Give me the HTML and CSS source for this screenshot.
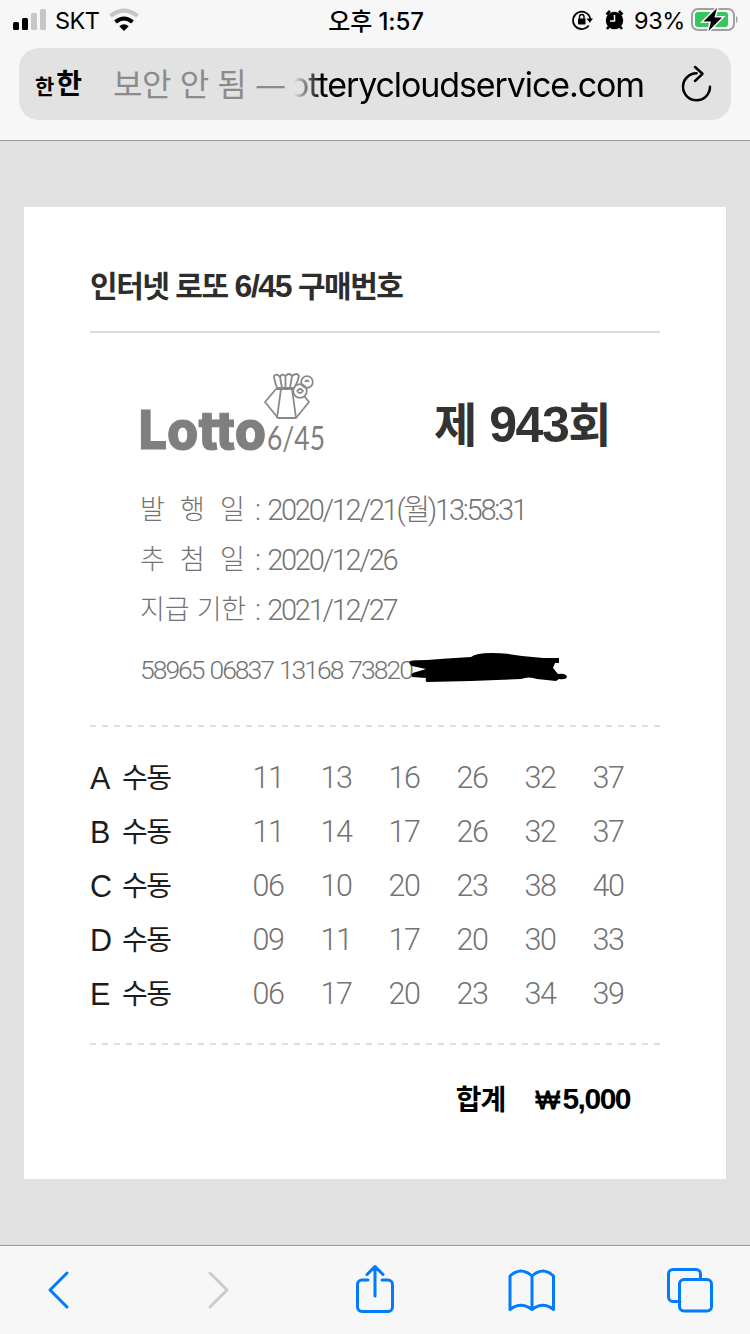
FILE: index.html
```
<!DOCTYPE html>
<html lang="ko">
<head>
    <meta charset="UTF-8">
    <meta name="viewport" content="width=device-width, initial-scale=1.0">
    <title>인터넷 로또 6/45 구매번호</title>
    <link rel="stylesheet" href="styles.css">
</head>
<body>
    <header>
        <div class="status">
            <div class="status-left">
                <svg width="34" height="22" viewBox="0 0 34 22">
                    <rect x="0" y="13" width="6" height="8" rx="1.5"/>
                    <rect x="9" y="9" width="6" height="12" rx="1.5"/>
                    <rect x="18" y="4" width="6" height="17" rx="1.5" fill="#c6c6c6"/>
                    <rect x="27" y="0" width="6" height="21" rx="1.5" fill="#c6c6c6"/>
                </svg>
                <span class="carrier">SKT</span>
                <svg width="30" height="22" viewBox="0 0 30 22">
                    <path d="M1.5 7Q15 -3.8 28.500 7" fill="none" stroke="#c6c6c6" stroke-width="4"/>
                    <path d="M6.500 13Q15 6 23.500 13" fill="none" stroke="#000" stroke-width="4"/>
                    <path d="M10.300 17.300Q15 13 19.700 17.300L15 22Z"/>
                </svg>
            </div>
            <span class="clock">오후 1:57</span>
            <div class="status-right">
                <svg width="22" height="20" viewBox="0 0 22 20">
                    <path d="M16.700 15.600A8.700 8.700 0 1 1 18.300 9" fill="none" stroke="#000" stroke-width="1.700"/>
                    <path d="M14.500 8.500H21L17.800 12.800Z"/>
                    <rect x="6" y="8.500" width="7.500" height="6" rx=".8"/>
                    <path d="M7.500 9V6.700a2.250 2.250 0 0 1 4.500 0V9" fill="none" stroke="#000" stroke-width="1.400"/>
                </svg>
                <svg class="alarm" width="20" height="20" viewBox="0 0 20 20">
                    <circle cx="9.500" cy="10.500" r="8.700"/>
                    <path d="M1.500 4.500L5 1M14 1l3.500 3.500M4 16.500l-2 2.500M15 16.500l2 2.500" stroke="#000" stroke-width="2.600"/>
                    <path d="M9.500 5v6H5" fill="none" stroke="#f7f7f7" stroke-width="1.500"/>
                </svg>
                <span class="percent">93%</span>
                <svg width="48" height="26" viewBox="0 0 48 26">
                    <rect x="1" y="2" width="42" height="21" rx="6" fill="none" stroke="#a0a0a0" stroke-width="2"/>
                    <rect x="4" y="5" width="33" height="15" rx="3" fill="#34c759"/>
                    <path d="M45 8.500q3 4 0 8Z" fill="#a0a0a0"/>
                    <path d="M26 1L12.500 14.500H20L17.500 24L31 10.500H23.500Z" stroke="#f7f7f7" stroke-width="3" paint-order="stroke"/>
                </svg>
            </div>
        </div>
        <div class="address">
            <div class="text-size"><span class="small">한</span><span class="big">한</span></div>
            <div class="insecure">보안 안 됨<span class="dash">—</span></div>
            <div class="domain"><span>otterycloudservice.com</span></div>
            <svg class="reload" width="32" height="38" viewBox="0 0 32 38">
                <path d="M15.500 8.300A13.500 13.500 0 1 0 29 21.800" fill="none" stroke="#000" stroke-width="2.500" stroke-linecap="round"/>
                <path d="M14 2L21.500 8.800L14 16" fill="none" stroke="#000" stroke-width="2.500" stroke-linecap="round" stroke-linejoin="round"/>
            </svg>
        </div>
    </header>

    <main>
        <div class="ticket">
            <h1>인터넷 로또 <b>6/45</b> 구매번호</h1>
            <div class="info">
                <div class="round">
                    <svg class="logo" width="190" height="84" viewBox="0 0 190 84">
                        <g fill="none" stroke="#898989" stroke-width="1.800" stroke-linejoin="round">
                            <path d="M136 18L125 31L138 47H156L169 31L158 17"/>
                            <path d="M141 18L137 47M152 18L156 47"/>
                            <path d="M137 17Q134 8 134 5Q137 2 140 6Q142 2 145.500 5Q149 1 152 5Q157 1 159 5Q158 11 154 17M140 6L142 17M145.500 5V17M152 5L150 17"/>
                            <path d="M136 17.500H156" stroke-width="3"/>
                            <circle cx="160" cy="20" r="6.800" fill="#fff"/>
                            <path d="M157 20q3-4 6 0q-3 4-6 0"/>
                            <circle cx="167" cy="11" r="5.800"/>
                            <path d="M165 11q2-3 4 0"/>
                        </g>
                        <text class="word" x="-1.500" y="78" textLength="127.500" lengthAdjust="spacingAndGlyphs">Lotto</text>
                        <text class="type" x="127" y="78.500" textLength="58" lengthAdjust="spacingAndGlyphs">6/45</text>
                    </svg>
                    <h2>제 <b>943</b>회</h2>
                </div>
                <dl>
                    <div><dt class="wide">발 행 일</dt><dd>: 2020/12/21(월)13:58:31</dd></div>
                    <div><dt class="wide">추 첨 일</dt><dd>: 2020/12/26</dd></div>
                    <div><dt>지급 기한</dt><dd>: 2021/12/27</dd></div>
                </dl>
                <div class="serial">
                    <span>58965 06837 13168 73820</span>
                    <svg class="scribble" width="160" height="32" viewBox="0 0 160 32">
                        <path d="M1 8Q6 7 18 7L38 5.500L62 4Q67 0 82 0Q98 0 113 3L134 5H150V10H146L144 15L149 21Q157 20 158 24Q157 27 150 26L147 28L128 26Q120 23 112 26L62 28L18 29Q16 29 17 25L3 24Q1 20 7 19L17 16L3 13Q-1 10 1 8Z"/>
                    </svg>
                </div>
            </div>
            <div class="games">
                <div class="game"><span class="letter">A</span><span class="mode">수동</span><i>11</i><i>13</i><i>16</i><i>26</i><i>32</i><i>37</i></div>
                <div class="game"><span class="letter">B</span><span class="mode">수동</span><i>11</i><i>14</i><i>17</i><i>26</i><i>32</i><i>37</i></div>
                <div class="game"><span class="letter">C</span><span class="mode">수동</span><i>06</i><i>10</i><i>20</i><i>23</i><i>38</i><i>40</i></div>
                <div class="game"><span class="letter">D</span><span class="mode">수동</span><i>09</i><i>11</i><i>17</i><i>20</i><i>30</i><i>33</i></div>
                <div class="game"><span class="letter">E</span><span class="mode">수동</span><i>06</i><i>17</i><i>20</i><i>23</i><i>34</i><i>39</i></div>
            </div>
            <div class="total">
                <span class="sum">합계</span>
                <span class="price"><span class="won">₩</span>5,000</span>
            </div>
        </div>
    </main>

    <footer>
        <svg width="24" height="40" viewBox="0 0 24 40"><path d="M21 3L4 20L21 37"/></svg>
        <svg class="off" width="24" height="40" viewBox="0 0 24 40"><path d="M3 3L20 20L3 37"/></svg>
        <svg width="40" height="50" viewBox="0 0 40 50">
            <path d="M13 15H7a4.500 4.500 0 0 0-4.500 4.500V42A4.500 4.500 0 0 0 7 46.500H33A4.500 4.500 0 0 0 37.500 42V19.500A4.500 4.500 0 0 0 33 15H27M20 31V1.500M12 9.500L20 1.500L28 9.500"/>
        </svg>
        <svg width="50" height="44" viewBox="0 0 50 44">
            <path d="M3 41.500V8Q14 -2 25 8Q36 -2 46.500 8V41.500Q36 33 25 41.500Q14 33 3 41.500ZM25 8V41"/>
        </svg>
        <svg width="48" height="46" viewBox="0 0 48 46">
            <path d="M14 34.500H7A4.500 4.500 0 0 1 2.500 30V7A4.500 4.500 0 0 1 7 2.500H30A4.500 4.500 0 0 1 34.500 7V12"/>
            <rect x="13.500" y="12.500" width="32" height="31.500" rx="4.500"/>
        </svg>
    </footer>
</body>
</html>
```
FILE: styles.css
```
* {
    box-sizing: border-box;
}
body {
    margin: 0;
    height: 1334px;
    display: flex;
    flex-direction: column;
    background-color: #e1e1e1;
    color: #000;
    font-family: Inter, "Noto Sans CJK KR", sans-serif;
    overflow: hidden;
}
svg {
    display: block;
    flex: none;
    overflow: visible;
}
span, i, h1, h2, dt, dd {
    white-space: nowrap;
}

/* Browser top bar */
header {
    height: 141px;
    background-color: #f7f7f7;
    border-bottom: 1px solid #9b9b9b;
}
.status {
    height: 48px;
    padding: 0 11px 8px 13px;
    display: grid;
    grid-template-columns: 1fr auto 1fr;
    align-items: center;
    font-size: 23.5px;
}
.status-left, .status-right {
    display: flex;
    align-items: center;
}
.status-right {
    justify-content: flex-end;
}
.carrier {
    margin: 0 9px 0 8px;
    letter-spacing: -0.5px;
}
.clock {
    padding-bottom: 2px;
    font-weight: 500;
    font-size: 24px;
    letter-spacing: -0.1px;
}
.alarm {
    margin: 0 9px 0 11px;
}
.percent {
    margin-right: 6px;
    letter-spacing: -0.4px;
}
.address {
    height: 72px;
    margin: 0 19px;
    padding: 0 18px 0 16px;
    display: flex;
    align-items: center;
    border-radius: 20px;
    background-color: #e2e2e2;
    font-size: 34px;
}
.text-size {
    width: 78px;
    padding-top: 3px;
    display: flex;
    align-items: baseline;
    font-weight: 700;
    line-height: 42px;
}
.small {
    margin-right: 2px;
    font-size: 21px;
}
.big {
    font-size: 28px;
}
.insecure {
    width: 174px;
    padding-bottom: 4px;
    color: #8b8b8b;
    font-size: 32px;
    font-weight: 400;
    letter-spacing: -0.4px;
    white-space: nowrap;
}
.dash {
    margin-left: 10px;
    font-size: 28px;
}
.domain {
    width: 357px;
    padding-right: 0;
    display: flex;
    justify-content: flex-end;
    overflow: hidden;
    letter-spacing: -1.1px;
    -webkit-mask-image: linear-gradient(to right, transparent 7px, #000 34px);
    mask-image: linear-gradient(to right, transparent 7px, #000 34px);
}
.reload {
    margin-left: auto;
}

/* Ticket */
main {
    flex: 1;
    padding: 66px 24px;
}
.ticket {
    height: 972px;
    padding: 0 66px;
    background-color: #fff;
}
h1, h2, dl, dd {
    margin: 0;
}
h1 {
    height: 126px;
    padding-top: 54px;
    border-bottom: 2px solid #dcdcdc;
    color: #2d2d2d;
    font: 700 30px/50px "Liberation Sans", "Noto Sans CJK KR", sans-serif;
    letter-spacing: -1.45px;
}
h1 b {
    font-size: 32px;
}
.info {
    padding: 38px 50px 0;
    height: 392px;
    color: #737373;
    font-weight: 300;
}
.round {
    height: 113px;
    display: flex;
    justify-content: space-between;
}
.logo {
    fill: #7f7f7f;
}
.word {
    font: 800 53px Inter, sans-serif;
    stroke: #7f7f7f;
    stroke-width: 1px;
}
.type {
    font: 400 33px Lato, sans-serif;
}
h2 {
    color: #333;
    font: 700 47px/108px "Liberation Sans", "Noto Sans CJK KR", sans-serif;
    letter-spacing: -1.5px;
    word-spacing: 2px;
}
h2 b {
    font-size: 50px;
}
dl > div {
    height: 50px;
    display: flex;
    font: 300 29px/52px Roboto, "Noto Sans CJK KR", sans-serif;
    letter-spacing: -2.25px;
    word-spacing: 3.5px;
}
dt {
    width: 115px;
    font-size: 27px;
    letter-spacing: -0.2px;
    word-spacing: 1px;
}
dt.wide {
    word-spacing: 9px;
}
.serial {
    position: relative;
    height: 66px;
    font: 300 26.5px/72px Roboto, sans-serif;
    letter-spacing: -2px;
    word-spacing: 1.5px;
}
.scribble {
    position: absolute;
    left: 269px;
    top: 19px;
    fill: #000;
}

/* Number rows, ruled off by dashes above and below */
.games {
    height: 320px;
    padding: 26px 0 0;
    background:
        repeating-linear-gradient(to right, #dedede 0 6px, transparent 6px 12px) top / 100% 2px no-repeat,
        repeating-linear-gradient(to right, #dedede 0 6px, transparent 6px 12px) bottom / 100% 2px no-repeat;
}
.game {
    height: 54px;
    display: grid;
    grid-template-columns: 32px 112px repeat(6, 68px);
    align-items: center;
    line-height: 54px;
}
.letter {
    color: #1c1c1c;
    font: 400 30.5px "Liberation Sans", sans-serif;
}
.mode {
    color: #1c1c1c;
    font-size: 28px;
    letter-spacing: -1.5px;
}
.game i {
    color: #737373;
    font: 300 30.5px/54px Roboto, sans-serif;
    text-align: center;
    letter-spacing: -1.3px;
}
.total {
    height: 108px;
    padding-right: 30px;
    display: flex;
    justify-content: flex-end;
    align-items: center;
    font: 700 30px "Liberation Sans", "Noto Sans CJK KR", sans-serif;
    letter-spacing: -1.5px;
}
.sum {
    margin-right: 30px;
    padding-bottom: 2px;
    font-size: 28px;
    letter-spacing: -1px;
}
.won {
    margin-right: 4px;
    font-size: 26px;
    font-weight: 400;
    -webkit-text-stroke: 0.8px #000;
}

/* Browser toolbar */
footer {
    height: 89px;
    padding-left: 46px;
    display: grid;
    grid-template-columns: 161px 148px 152px 159px 48px;
    align-items: center;
    background-color: #f7f7f7;
    border-top: 1px solid #9b9b9b;
}
footer svg {
    fill: none;
    stroke: #007aff;
    stroke-width: 3;
    stroke-linecap: round;
    stroke-linejoin: round;
}
footer svg.off {
    stroke: #cbcbcb;
}
```
